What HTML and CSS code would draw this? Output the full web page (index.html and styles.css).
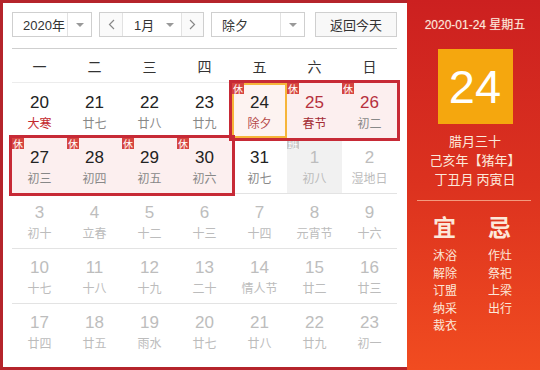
FILE: index.html
```html
<!DOCTYPE html>
<html lang="zh">
<head>
<meta charset="utf-8">
<link rel="stylesheet" href="styles.css">
</head>
<body>
<div class="card">
  <div class="toolbar">
    <div class="sel year"><span class="val">2020年</span><span class="drop"><i class="tri"></i></span></div>
    <div class="sel month">
      <span class="nav"><svg width="7" height="11" viewBox="0 0 7 11"><polyline points="6,1 1.5,5.5 6,10" fill="none" stroke="#888" stroke-width="1.2"/></svg></span>
      <span class="mval"><span>1月</span><i class="tri"></i></span>
      <span class="nav"><svg width="7" height="11" viewBox="0 0 7 11"><polyline points="1,1 5.5,5.5 1,10" fill="none" stroke="#888" stroke-width="1.2"/></svg></span>
    </div>
    <div class="sel hol"><span class="val">除夕</span><span class="drop"><i class="tri"></i></span></div>
    <button class="today">返回今天</button>
  </div>
  <div class="grid">
    <div class="wd">一</div><div class="wd">二</div><div class="wd">三</div><div class="wd">四</div><div class="wd">五</div><div class="wd">六</div><div class="wd">日</div>

    <div class="cell r1"><b>20</b><span class="lu red">大寒</span></div>
    <div class="cell r1"><b>21</b><span class="lu">廿七</span></div>
    <div class="cell r1"><b>22</b><span class="lu">廿八</span></div>
    <div class="cell r1"><b>23</b><span class="lu">廿九</span></div>
    <div class="cell r1 rest today-cell"><em class="badge">休</em><b>24</b><span class="lu red2">除夕</span></div>
    <div class="cell r1 rest"><em class="badge">休</em><b class="rednum">25</b><span class="lu red3">春节</span></div>
    <div class="cell r1 rest"><em class="badge">休</em><b class="rednum">26</b><span class="lu">初二</span></div>

    <div class="cell rest"><em class="badge">休</em><b>27</b><span class="lu">初三</span></div>
    <div class="cell rest"><em class="badge">休</em><b>28</b><span class="lu">初四</span></div>
    <div class="cell rest"><em class="badge">休</em><b>29</b><span class="lu">初五</span></div>
    <div class="cell rest"><em class="badge">休</em><b>30</b><span class="lu">初六</span></div>
    <div class="cell"><b>31</b><span class="lu">初七</span></div>
    <div class="cell other work"><em class="badge gray">班</em><b>1</b><span class="lu">初八</span></div>
    <div class="cell other"><b>2</b><span class="lu">湿地日</span></div>

    <div class="cell other line"><b>3</b><span class="lu">初十</span></div>
    <div class="cell other line"><b>4</b><span class="lu">立春</span></div>
    <div class="cell other line"><b>5</b><span class="lu">十二</span></div>
    <div class="cell other line"><b>6</b><span class="lu">十三</span></div>
    <div class="cell other line"><b>7</b><span class="lu">十四</span></div>
    <div class="cell other line"><b>8</b><span class="lu">元宵节</span></div>
    <div class="cell other line"><b>9</b><span class="lu">十六</span></div>

    <div class="cell other line"><b>10</b><span class="lu">十七</span></div>
    <div class="cell other line"><b>11</b><span class="lu">十八</span></div>
    <div class="cell other line"><b>12</b><span class="lu">十九</span></div>
    <div class="cell other line"><b>13</b><span class="lu">二十</span></div>
    <div class="cell other line"><b>14</b><span class="lu">情人节</span></div>
    <div class="cell other line"><b>15</b><span class="lu">廿二</span></div>
    <div class="cell other line"><b>16</b><span class="lu">廿三</span></div>

    <div class="cell other line"><b>17</b><span class="lu">廿四</span></div>
    <div class="cell other line"><b>18</b><span class="lu">廿五</span></div>
    <div class="cell other line"><b>19</b><span class="lu">雨水</span></div>
    <div class="cell other line"><b>20</b><span class="lu">廿七</span></div>
    <div class="cell other line"><b>21</b><span class="lu">廿八</span></div>
    <div class="cell other line"><b>22</b><span class="lu">廿九</span></div>
    <div class="cell other line"><b>23</b><span class="lu">初一</span></div>

    <div class="hbox hb1"></div>
    <div class="hbox hb2"></div>
  </div>
</div>
<aside class="panel">
  <div class="pdate">2020-01-24 星期五</div>
  <div class="bigday">24</div>
  <div class="pinfo">腊月三十</div>
  <div class="pinfo">己亥年【猪年】</div>
  <div class="pinfo">丁丑月 丙寅日</div>
  <div class="sep"></div>
  <div class="yiji">
    <div class="col">
      <div class="yjt">宜</div>
      <div class="it">沐浴</div><div class="it">解除</div><div class="it">订盟</div><div class="it">纳采</div><div class="it">裁衣</div>
    </div>
    <div class="col">
      <div class="yjt">忌</div>
      <div class="it">作灶</div><div class="it">祭祀</div><div class="it">上梁</div><div class="it">出行</div>
    </div>
  </div>
</aside>
</body>
</html>
```

FILE: styles.css
```css
* { box-sizing: border-box; }
html, body { margin: 0; padding: 0; }
body {
  width: 540px;
  height: 370px;
  overflow: hidden;
  display: flex;
  background: #b5242b;
  font-family: "Liberation Sans", "Noto Sans CJK SC", sans-serif;
}
.card {
  width: 404px;
  height: 364px;
  margin: 3px 0 3px 3px;
  background: #fff;
  padding: 9px 10px 0 9px;
}
.toolbar {
  display: flex;
  height: 25px;
  margin-bottom: 11px;
  font-size: 13px;
  color: #333;
}
.sel {
  display: flex;
  border: 1px solid #cfcfcf;
  background: #fff;
  height: 25px;
}
.year { width: 80px; }
.month { width: 105px; margin-left: 7px; }
.hol { width: 94px; margin-left: 7px; }
.val {
  flex: 1;
  display: flex;
  align-items: center;
  padding-left: 10px;
}
.drop {
  width: 24px;
  border-left: 1px solid #e2e2e2;
  display: flex;
  align-items: center;
  justify-content: center;
}
.tri {
  display: block;
  width: 0;
  height: 0;
  border-left: 4px solid transparent;
  border-right: 4px solid transparent;
  border-top: 4px solid #999;
}
.nav {
  width: 23px;
  display: flex;
  align-items: center;
  justify-content: center;
  background: #fafafa;
}
.nav:first-child { border-right: 1px solid #e2e2e2; }
.nav:last-child { border-left: 1px solid #e2e2e2; width: 22px; }
.mval {
  flex: 1;
  display: flex;
  align-items: center;
  justify-content: space-between;
  padding: 0 7px 0 11px;
}
.today {
  margin-left: 10px;
  width: 82px;
  height: 25px;
  border: 1px solid #cfcfcf;
  background: #f8f8f8;
  font: inherit;
  color: #333;
  padding: 0;
}
.grid {
  position: relative;
  display: grid;
  grid-template-columns: repeat(7, 55px);
  grid-template-rows: 34px repeat(5, 55px);
  border-top: 1px solid #cfcfcf;
  width: 385px;
}
.wd {
  display: flex;
  align-items: center;
  justify-content: center;
  font-size: 14px;
  color: #333;
  border-bottom: 1px solid #ececec;
  font-family: "Noto Sans CJK SC", sans-serif;
}
.cell {
  position: relative;
  display: flex;
  flex-direction: column;
  align-items: center;
  padding-top: 9px;
}
.cell.line { border-top: 1px solid #e3e3e3; padding-top: 8px; }
.cell b {
  font-weight: normal;
  font-size: 17px;
  line-height: 22px;
  color: #222;
}
.lu {
  font-family: "Noto Sans CJK SC", sans-serif;
  font-size: 12px;
  line-height: 18px;
  color: #888;
}
.red { color: #c3282d; }
.red2 { color: #b64a4a; }
.red3 { color: #a32c33; }
.cell b.rednum { color: #b6303d; }
.other b { color: #bdbdbd; }
.other .lu { color: #bcbcbc; }
.rest { background: #fcefef; }
.today-cell { border: 2px solid #f6b53a; background: #fdf3f1; padding-top: 7px; }
.work { background: #f1f1f1; }
.badge {
  position: absolute;
  left: 0;
  top: 0;
  width: 12px;
  height: 11px;
  background: #d6453f;
  color: #fff;
  font-style: normal;
  font-size: 10px;
  line-height: 11px;
  text-align: center;
  font-family: "Noto Sans CJK SC", sans-serif;
}
.today-cell .badge { left: -2px; top: -2px; }
.badge.gray { background: #c9c9c9; }
.hbox {
  position: absolute;
  inset: -3px;
  border: 3px solid #c72a36;
  pointer-events: none;
}
.hb1 { grid-column: 5 / 8; grid-row: 2 / 3; }
.hb2 { grid-column: 1 / 5; grid-row: 3 / 4; }
.panel {
  flex: 1;
  background: linear-gradient(180deg, #cc2020 0%, #dc321f 50%, #f14c20 100%);
  color: #fce8da;
  display: flex;
  flex-direction: column;
  align-items: center;
  padding-top: 17px;
  font-family: "Noto Sans CJK SC", sans-serif;
}
.pdate {
  font-family: "Liberation Sans", "Noto Sans CJK SC", sans-serif;
  font-size: 12px;
  line-height: 16px;
  text-shadow: 0 0 1px rgba(255,255,255,0.4);
}
.bigday {
  margin-top: 16px;
  width: 75px;
  height: 75px;
  background: #f5a70e;
  color: #fff;
  font-family: "Liberation Sans", sans-serif;
  font-size: 47px;
  line-height: 75px;
  text-align: center;
  margin-bottom: 7px;
}
.pinfo {
  font-size: 13px;
  line-height: 19px;
}
.sep {
  align-self: stretch;
  margin: 12px 12px 0 10px;
  height: 1px;
  background: #f39a7e;
}
.yiji {
  align-self: stretch;
  display: flex;
  padding-left: 26px;
  margin-top: 11px;
  font-size: 12px;
}
.col { width: 55px; }
.it { height: 17.5px; line-height: 17.5px; }
.yjt {
  font-size: 23px;
  font-weight: bold;
  line-height: 28px;
  margin-bottom: 6px;
}
```
